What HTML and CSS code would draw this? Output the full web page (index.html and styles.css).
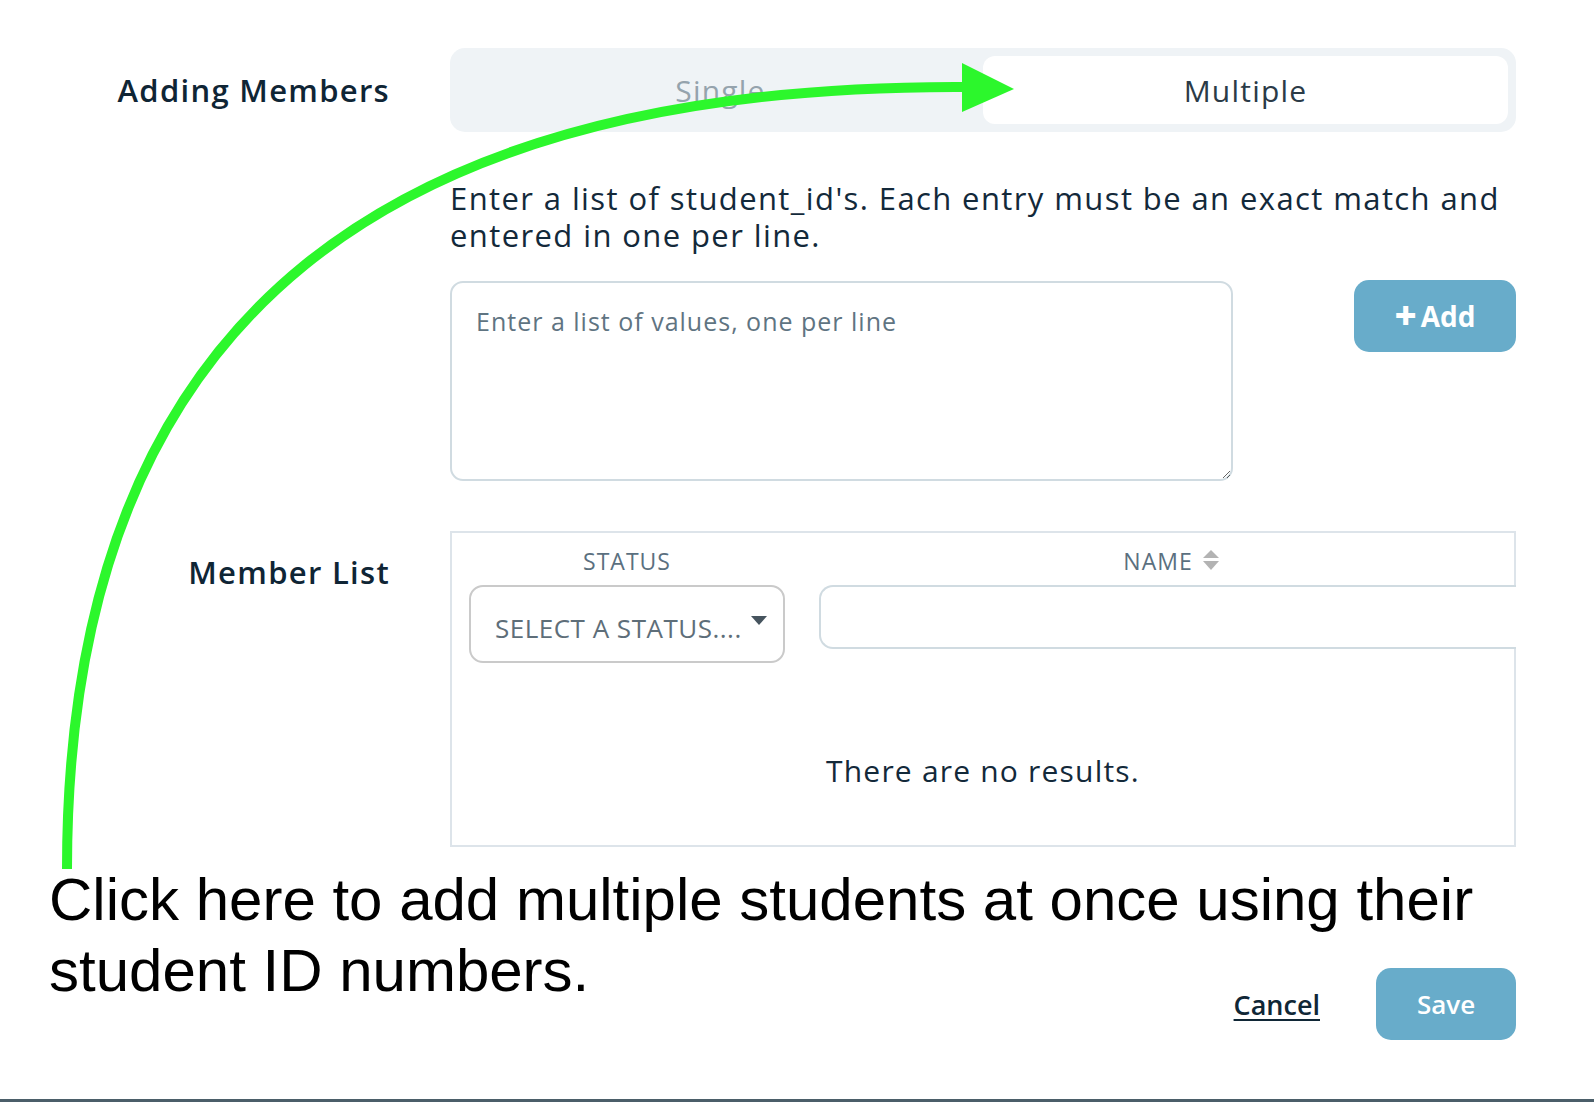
FILE: index.html
```html
<!DOCTYPE html>
<html lang="en">
<head>
<meta charset="utf-8">
<title>Adding Members</title>
<link rel="stylesheet" href="styles.css">
</head>
<body>
<div class="page">
  <div class="form">
    <div class="row row-mode">
      <div class="label">Adding Members</div>
      <div class="segmented">
        <button class="seg">Single</button>
        <button class="seg active">Multiple</button>
      </div>
    </div>
    <div class="row row-entry">
      <div></div>
      <div class="entry">
        <p class="desc">Enter a list of student_id's. Each entry must be an exact match and entered in one per line.</p>
        <div class="entry-input">
          <textarea class="values" placeholder="Enter a list of values, one per line"></textarea>
          <button class="btn add"><span class="plus">+</span>Add</button>
        </div>
      </div>
    </div>
    <div class="row row-members">
      <div class="label label-members">Member List</div>
      <div class="table">
        <div class="thead">
          <div class="th">STATUS</div>
          <div class="th"><span class="th-name">NAME<svg class="sort" width="16" height="20" viewBox="0 0 16 20"><path d="M8 0 L16 8 L0 8 Z" fill="#b3b3b3"/><path d="M0 11 L16 11 L8 20 Z" fill="#b3b3b3"/></svg></span></div>
        </div>
        <div class="filters">
          <div class="cell"><div class="select"><span>SELECT A STATUS....</span><span class="caret"></span></div></div>
          <div class="cell cell-name"><input class="name-input" type="text"></div>
        </div>
        <p class="empty">There are no results.</p>
      </div>
    </div>
    <div class="footer">
      <a class="cancel" href="#">Cancel</a>
      <button class="btn save">Save</button>
    </div>
  </div>
  <div class="annotation">
    <span class="ann-line">Click here to add multiple students at once using their</span>
    <span class="ann-line">student ID numbers.</span>
  </div>
  <svg class="arrow" width="1594" height="1102" viewBox="0 0 1594 1102">
    <path d="M67 869 C67 305, 400 84, 966 87" fill="none" stroke="#2cf72c" stroke-width="10"/>
    <path d="M962 63 L1014 89 L962 112 Z" fill="#2cf72c"/>
  </svg>
</div>
</body>
</html>
```
FILE: styles.css
```css
* { box-sizing: border-box; }
html, body { margin: 0; padding: 0; background: #ffffff; }
body { font-family: "Open Sans", "Noto Sans", sans-serif; color: #102736; }

.page {
  position: relative;
  width: 1594px;
  height: 1102px;
  border-bottom: 3px solid #4b5e69;
  overflow: hidden;
}

.form { padding-top: 48px; }

.row {
  display: grid;
  grid-template-columns: 389px 1066px;
  column-gap: 61px;
}

.label {
  text-align: right;
  font-size: 31px;
  line-height: 40px;
  font-weight: 600;
  color: #0f2535;
  letter-spacing: 1.3px;
  margin-right: -1px;
}

.row-mode { align-items: center; }

.segmented {
  display: grid;
  grid-template-columns: 1fr 1fr;
  height: 84px;
  padding: 8px;
  background: #eff3f6;
  border-radius: 15px;
}
.seg {
  font-family: inherit;
  font-size: 30px;
  letter-spacing: 1.2px;
  color: #95a3ad;
  background: transparent;
  border: none;
  border-radius: 12px;
  padding: 0;
}
.seg.active { background: #ffffff; color: #2b3b47; }

.row-entry { margin-top: 48px; }
.desc {
  margin: 0;
  font-size: 31px;
  letter-spacing: 1.4px;
  line-height: 37px;
  color: #13293a;
}
.entry-input {
  margin-top: 27px;
  display: flex;
  justify-content: space-between;
  align-items: flex-start;
}
.values {
  width: 783px;
  height: 200px;
  border: 2px solid #d0dbe1;
  border-radius: 13px;
  padding: 21px 24px;
  font-family: inherit;
  font-size: 25px;
  letter-spacing: 1px;
  color: #13293a;
  outline: none;
}
.values::placeholder { color: #5f7482; }

.btn {
  font-family: inherit;
  color: #ffffff;
  background: #68acca;
  border: none;
  border-radius: 15px;
  font-weight: 700;
}
.add {
  width: 162px;
  height: 72px;
  margin-top: -1px;
  font-size: 28px;
  display: flex;
  align-items: center;
  justify-content: center;
  gap: 4px;
}
.plus { font-size: 38px; font-weight: 800; line-height: 1; margin-top: -4px; }

.row-members { margin-top: 50px; }
.label-members { padding-top: 21px; }

.table {
  height: 316px;
  border: 2px solid #dde4ea;
  padding-top: 14px;
}
.thead, .filters {
  display: grid;
  grid-template-columns: 350px 1fr;
}
.th {
  text-align: center;
  font-size: 23px;
  letter-spacing: 1px;
  line-height: 28px;
  color: #5b707f;
}
.th-name { position: relative; }
.sort { position: absolute; left: calc(100% + 10px); top: 5px; }

.filters { margin-top: 10px; align-items: start; }
.cell { padding-left: 17px; padding-right: 17px; }
.cell-name { padding-right: 0; margin-right: -2px; }
.select {
  height: 78px;
  border: 2px solid #cacaca;
  border-radius: 14px;
  display: flex;
  align-items: center;
  justify-content: space-between;
  padding: 8px 16px 0 24px;
  font-size: 26px;
  letter-spacing: 0.5px;
  color: #5e6e79;
}
.caret {
  width: 0; height: 0;
  border-left: 8px solid transparent;
  border-right: 8px solid transparent;
  border-top: 9px solid #46545e;
  margin-top: -16px;
}
.name-input {
  display: block;
  width: 100%;
  height: 64px;
  border: 2px solid #d0dbe1;
  border-right: none;
  border-radius: 14px 0 0 14px;
  background: #ffffff;
  outline: none;
}

.empty {
  margin: 89px 0 0;
  text-align: center;
  font-size: 30px;
  letter-spacing: 1.2px;
  line-height: 37px;
  color: #13293a;
}

.footer {
  display: flex;
  justify-content: flex-end;
  align-items: center;
  gap: 56px;
  width: 1516px;
  margin-top: 121px;
}
.cancel {
  font-size: 27px;
  font-weight: 600;
  color: #102736;
  text-decoration: underline;
  text-underline-offset: 4px;
  text-decoration-thickness: 2px;
}
.save {
  width: 140px;
  height: 72px;
  font-size: 26px;
  font-weight: 600;
}

.annotation {
  position: absolute;
  left: 49px;
  top: 864px;
  margin: 0;
  font-family: "Liberation Sans", Arial, sans-serif;
  font-size: 60px;
  line-height: 71px;
  color: #000000;
}
.ann-line { display: block; width: fit-content; white-space: nowrap; }

.arrow { position: absolute; left: 0; top: 0; pointer-events: none; }
```
